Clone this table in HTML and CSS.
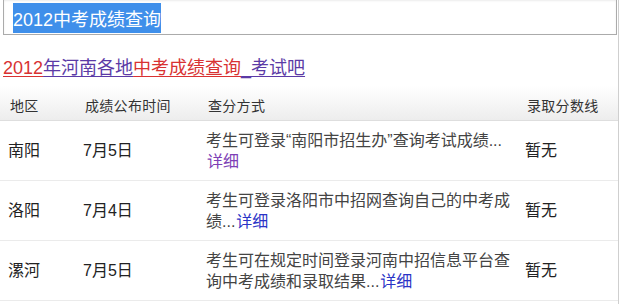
FILE: index.html
```html
<!DOCTYPE html>
<html lang="zh-CN">
<head>
<meta charset="utf-8">
<title>2012中考成绩查询</title>
<link rel="stylesheet" href="styles.css">
</head>
<body>
<div class="page">
  <div class="search"><span class="sel">2012中考成绩查询</span></div>
  <h3 class="title"><a href="#"><em>2012</em><span>年河南各地</span><em>中考成绩查询</em><span>_考试吧</span></a></h3>
  <div class="table">
    <div class="row head">
      <div class="cell">地区</div>
      <div class="cell">成绩公布时间</div>
      <div class="cell">查分方式</div>
      <div class="cell">录取分数线</div>
    </div>
    <div class="row">
      <div class="cell">南阳</div>
      <div class="cell">7月5日</div>
      <div class="cell desc">考生可登录“南阳市招生办”查询考试成绩... <a class="more visited" href="#">详细</a></div>
      <div class="cell">暂无</div>
    </div>
    <div class="row">
      <div class="cell">洛阳</div>
      <div class="cell">7月4日</div>
      <div class="cell desc">考生可登录洛阳市中招网查询自己的中考成绩...<a class="more" href="#">详细</a></div>
      <div class="cell">暂无</div>
    </div>
    <div class="row">
      <div class="cell">漯河</div>
      <div class="cell">7月5日</div>
      <div class="cell desc">考生可在规定时间登录河南中招信息平台查询中考成绩和录取结果...<a class="more" href="#">详细</a></div>
      <div class="cell">暂无</div>
    </div>
  </div>
</div>
</body>
</html>
```
FILE: styles.css
```css
html, body {
  margin: 0;
  padding: 0;
  background: #fff;
}
body {
  font-family: "Liberation Sans", "Noto Sans CJK SC", sans-serif;
  color: #222;
}
.page {
  width: 618px;
  min-height: 100vh;
  border-right: 1px solid #cfcfcf;
}
.search {
  margin: -1px 1px 0 3px;
  height: 33px;
  border: 1px solid #ababab;
  box-shadow: inset 0 1px 2px rgba(0, 0, 0, 0.08);
  display: flex;
  align-items: center;
  padding: 1px 0 0 9px;
  box-sizing: content-box;
  font-size: 18px;
}
.sel {
  background: #3f8fea;
  color: #fff;
  padding: 2px 0;
}
.title {
  margin: 21px 0 6px 3px;
  font-size: 18px;
  font-weight: normal;
  line-height: 24px;
}
.title a {
  text-decoration: none;
}
.title em,
.title span {
  font-style: normal;
  text-decoration: underline;
  text-underline-offset: 2px;
}
.title em {
  color: #d83232;
}
.title span {
  color: #5b3aa6;
}
.row {
  display: grid;
  grid-template-columns: 75px 123px 319px 1fr;
  align-items: center;
  height: 59px;
  border-bottom: 1px solid #ebebeb;
  font-size: 16px;
  line-height: 21px;
}
.row.head {
  align-items: start;
  box-sizing: border-box;
  height: 35px;
  background: linear-gradient(#ffffff, #ededed);
  border-bottom: 1px solid #dedede;
  font-size: 14px;
  line-height: 20px;
  color: #333;
}
.row.head .cell {
  padding-top: 10px;
  padding-left: 10px;
  letter-spacing: 0.3px;
}
.cell {
  padding-left: 8px;
}
.desc {
  padding-right: 4px;
  color: #444;
}
.more {
  color: #2a33c6;
  text-decoration: none;
  margin-left: 1px;
}
.more.visited {
  color: #7d3fb6;
}
```
